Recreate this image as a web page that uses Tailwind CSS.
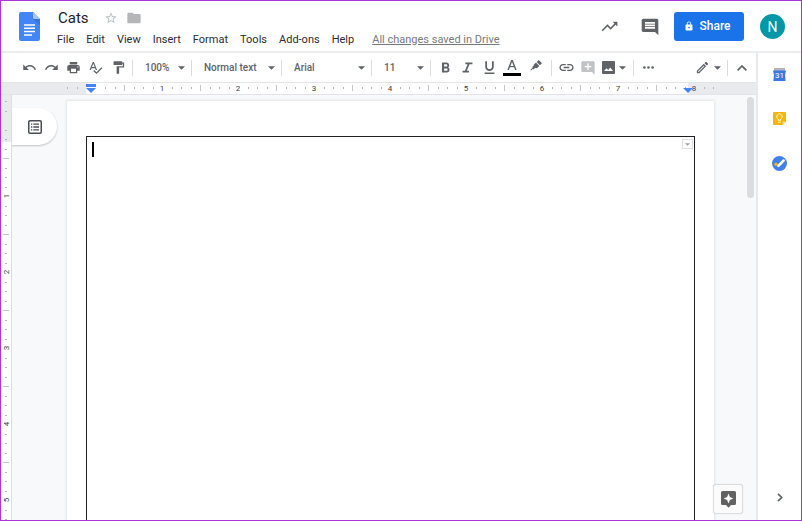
<!DOCTYPE html>
<html lang="en">
<head>
<meta charset="utf-8">
<title>Cats - Docs</title>
<script src="https://cdn.jsdelivr.net/npm/@tailwindcss/browser@4"></script>
</head>
<body>
<div class="flex h-screen flex-col overflow-hidden border border-[#ad35d3] bg-white font-[Roboto,sans-serif] text-[#3c4043]">

  <header class="flex h-[52px] shrink-0 items-start border-b-2 border-[#ebecee] pl-[18px] pr-4">
    <a href="#" aria-label="Docs home" class="mt-[11px] mr-[11px]">
      <svg class="block h-[29px] w-[21px]" viewBox="0 0 21 29"><path d="M2 0h12l7 7v20a2 2 0 0 1-2 2H2a2 2 0 0 1-2-2V2a2 2 0 0 1 2-2z" fill="#4285f4"/><path d="M14 7l7 6V7z" fill="#3a74dc"/><path d="M14 0l7 7h-5.500a1.500 1.500 0 0 1-1.500-1.500z" fill="#a6c5fa"/><path d="M5 13h11M5 16.300h11M5 19.600h11M5 22.900h8" stroke="#fff" stroke-width="1.500"/></svg>
    </a>
    <div class="flex flex-col pt-[7px]">
      <div class="flex h-5 items-center pl-[7px]">
        <h1 class="mr-[15px] text-[15px] leading-5 text-[#202124]">Cats</h1>
        <button aria-label="Star" class="mr-2"><svg class="block size-[14px]" viewBox="0 0 24 24" fill="#bdc1c6"><path d="M22 9.240l-7.190-.62L12 2 9.190 8.630 2 9.240l5.460 4.730L5.820 21 12 17.270 18.180 21l-1.630-7.030L22 9.240zM12 15.400l-3.760 2.270 1-4.280-3.320-2.880 4.380-.38L12 6.100l1.710 4.040 4.380.38-3.320 2.880 1 4.280L12 15.400z"/></svg></button>
        <button aria-label="Move to folder"><svg class="block size-4" viewBox="0 0 24 24" fill="#b4b6b8"><path d="M10 4H4c-1.100 0-2 .9-2 2v12c0 1.100.9 2 2 2h16c1.100 0 2-.9 2-2V8c0-1.100-.9-2-2-2h-8l-2-2z"/></svg></button>
      </div>
      <nav class="flex h-6 items-center gap-3 whitespace-nowrap pl-1.5 text-[11px] text-[#2b2d30]">
        <button>File</button><button>Edit</button><button>View</button><button>Insert</button><button>Format</button><button>Tools</button><button>Add-ons</button><button>Help</button>
        <a href="#" class="ml-1.5 text-[#777a7d] underline">All changes saved in Drive</a>
      </nav>
    </div>
    <div class="ml-auto flex items-center pt-[11px]">
      <button aria-label="Activity" class="mr-[21px]"><svg class="block size-[19px]" viewBox="0 0 24 24" fill="#5f6368"><path d="M16 6l2.290 2.290-4.880 4.880-4-4L2 16.590 3.410 18l6-6 4 4 6.300-6.290L22 12V6z"/></svg></button>
      <button aria-label="Comments" class="mr-[14px]"><svg class="block size-5" viewBox="0 0 24 24" fill="#5f6368"><path d="M21.990 4c0-1.100-.89-2-1.990-2H4c-1.100 0-2 .9-2 2v12c0 1.100.9 2 2 2h14l4 4-.01-18zM18 14H6v-2h12v2zm0-3H6V9h12v2zm0-3H6V6h12v2z"/></svg></button>
      <button class="mr-4 flex h-[29px] w-[70px] items-center justify-center gap-1.5 rounded-[3px] bg-[#1a73e8] pb-px pr-1 text-xs font-medium text-white"><svg class="block size-[10px]" viewBox="2 0 20 23" fill="#fff"><path d="M18 8h-1V6c0-2.760-2.240-5-5-5S7 3.240 7 6v2H6c-1.100 0-2 .9-2 2v10c0 1.100.9 2 2 2h12c1.100 0 2-.9 2-2V10c0-1.100-.9-2-2-2zm-6 9c-1.100 0-2-.9-2-2s.9-2 2-2 2 .9 2 2-.9 2-2 2zm3.100-9H8.900V6c0-1.710 1.390-3.100 3.100-3.100s3.100 1.390 3.100 3.100v2z"/></svg>Share</button>
      <button aria-label="Account: N" class="size-[25px] rounded-full bg-[#0097a7] text-sm text-white">N</button>
    </div>
  </header>

  <div class="flex min-h-0 flex-1">
    <div class="flex min-w-0 flex-1 flex-col">

      <div role="toolbar" aria-label="Formatting" class="flex h-[29px] shrink-0 items-center pl-[17px] pr-[3px] text-[10px] font-medium text-[#5f6368]">
        <button aria-label="Undo" class="flex w-[22px] justify-center"><svg class="size-[15px]" viewBox="0 0 24 24" fill="currentColor"><path d="M12.500 8c-2.650 0-5.050.99-6.900 2.600L2 7v9h9l-3.620-3.620c1.390-1.160 3.160-1.880 5.120-1.880 3.540 0 6.550 2.310 7.600 5.500l2.370-.78C21.080 11.030 17.150 8 12.500 8z"/></svg></button>
        <button aria-label="Redo" class="flex w-[22px] justify-center"><svg class="size-[15px]" viewBox="0 0 24 24" fill="currentColor"><path d="M18.400 10.600C16.550 8.990 14.150 8 11.500 8c-4.650 0-8.580 3.030-9.960 7.220L3.900 16c1.050-3.190 4.050-5.500 7.600-5.500 1.950 0 3.730.72 5.120 1.880L13 16h9V7l-3.600 3.600z"/></svg></button>
        <button aria-label="Print" class="flex w-[22px] justify-center"><svg class="size-[15px]" viewBox="0 0 24 24" fill="currentColor"><path d="M19 8H5c-1.660 0-3 1.340-3 3v6h4v4h12v-4h4v-6c0-1.660-1.340-3-3-3zm-3 11H8v-5h8v5zm3-7c-.55 0-1-.45-1-1s.45-1 1-1 1 .45 1 1-.45 1-1 1zm-1-9H6v4h12V3z"/></svg></button>
        <button aria-label="Spelling" class="flex w-[22px] justify-center"><svg class="size-[15px]" viewBox="0 0 24 24" fill="currentColor"><path d="M12.450 16h2.090L9.430 3H7.570L2.460 16h2.090l1.120-3h5.640l1.140 3zm-6.020-5L8.500 5.480 10.570 11H6.430zm15.160.59l-8.090 8.090L9.830 16l-1.410 1.410 5.090 5.090L23 13l-1.410-1.410z"/></svg></button>
        <button aria-label="Paint format" class="flex w-6 justify-center"><svg class="size-[15px]" viewBox="0 0 24 24" fill="currentColor"><path d="M18 4V3c0-.55-.45-1-1-1H5c-.55 0-1 .45-1 1v4c0 .55.45 1 1 1h12c.55 0 1-.45 1-1V6h1v4H9v11c0 .55.45 1 1 1h2c.55 0 1-.45 1-1v-9h8V4h-3z"/></svg></button>
        <span class="ml-0.5 h-4 w-px bg-[#dadce0]"></span>
        <label class="flex w-[58px] items-center"><select aria-label="Zoom" class="w-[58px] appearance-none pl-3"><option>100%</option></select><svg class="pointer-events-none -ml-[13px] h-1 w-[7px]" viewBox="0 0 8 4" fill="currentColor"><path d="M0 0h8L4 4z"/></svg></label>
        <span class="h-4 w-px bg-[#dadce0]"></span>
        <label class="flex w-[89px] items-center"><select aria-label="Styles" class="w-[89px] appearance-none pl-3"><option>Normal text</option></select><svg class="pointer-events-none -ml-[13px] h-1 w-[7px]" viewBox="0 0 8 4" fill="currentColor"><path d="M0 0h8L4 4z"/></svg></label>
        <span class="h-4 w-px bg-[#dadce0]"></span>
        <label class="flex w-[89px] items-center"><select aria-label="Font" class="w-[89px] appearance-none pl-3"><option>Arial</option></select><svg class="pointer-events-none -ml-[13px] h-1 w-[7px]" viewBox="0 0 8 4" fill="currentColor"><path d="M0 0h8L4 4z"/></svg></label>
        <span class="h-4 w-px bg-[#dadce0]"></span>
        <label class="flex w-[58px] items-center"><select aria-label="Font size" class="w-[58px] appearance-none pl-3"><option>11</option></select><svg class="pointer-events-none -ml-[13px] h-1 w-[7px]" viewBox="0 0 8 4" fill="currentColor"><path d="M0 0h8L4 4z"/></svg></label>
        <span class="mr-[3px] h-4 w-px bg-[#dadce0]"></span>
        <button aria-label="Bold" class="flex w-[22px] justify-center"><svg class="size-[17px]" viewBox="0 -1 24 24" fill="currentColor"><path d="M15.600 10.790c.97-.67 1.650-1.770 1.650-2.790 0-2.260-1.750-4-4-4H7v14h7.040c2.090 0 3.710-1.700 3.710-3.790 0-1.520-.86-2.820-2.150-3.420zM10 6.500h3c.83 0 1.500.67 1.500 1.500s-.67 1.500-1.500 1.500h-3v-3zm3.500 9H10v-3h3.500c.83 0 1.500.67 1.500 1.500s-.67 1.500-1.500 1.500z"/></svg></button>
        <button aria-label="Italic" class="flex w-[22px] justify-center"><svg class="size-[17px]" viewBox="0 -1 24 24" fill="currentColor"><path d="M9 4v2.500h3.200l-3.900 9H5V18h9v-2.500h-3l3.900-9H19V4z"/></svg></button>
        <button aria-label="Underline" class="flex w-[22px] justify-center"><svg class="size-[17px]" viewBox="0 0 24 24" fill="currentColor"><path d="M12 17c3.310 0 6-2.690 6-6V3h-2.500v8c0 1.930-1.570 3.500-3.500 3.500S8.500 12.930 8.500 11V3H6v8c0 3.310 2.690 6 6 6zm-7 2v2h14v-2H5z"/></svg></button>
        <button aria-label="Text color" class="flex w-6 justify-center"><svg class="h-[17px] w-[18px]" viewBox="0 0 18 17"><path d="M0 14h18v3H0z" fill="#000"/><path d="M8.200 1h1.600l3.900 10h-1.600l-1-2.700H6.900l-1 2.700H4.300zM9 2.900L7.400 7h3.200z" fill="#5f6368"/></svg></button>
        <button aria-label="Highlight color" class="flex w-6 justify-center pb-1"><svg class="h-[11px] w-[12px]" viewBox="0 0 12 11" fill="currentColor"><path d="M8.800 0L12 3.200 9.900 5.200 6.700 2zM6 2.600l3.300 3.300L7 8.300 5 8.100 3.600 9.500 2.900 8.800l-1.500 1.400H0l2.700-2.800-.4-.4 1.500-1.400-.1-.9z"/></svg></button>
        <span class="mx-[3px] h-4 w-px bg-[#dadce0]"></span>
        <button aria-label="Insert link" class="flex w-[22px] justify-center"><svg class="size-[17px]" viewBox="0 0 24 24" fill="currentColor"><path d="M3.900 12c0-1.710 1.390-3.100 3.100-3.100h4V7H7c-2.760 0-5 2.240-5 5s2.240 5 5 5h4v-1.900H7c-1.710 0-3.100-1.390-3.100-3.100zM8 13h8v-2H8v2zm9-6h-4v1.900h4c1.710 0 3.100 1.390 3.100 3.100s-1.390 3.100-3.100 3.100h-4V17h4c2.760 0 5-2.240 5-5s-2.240-5-5-5z"/></svg></button>
        <button aria-label="Add comment" class="flex w-[22px] justify-center text-[#c0c2c5]" disabled><svg class="size-4" viewBox="0 0 24 24" fill="currentColor"><path d="M22 4c0-1.100-.9-2-2-2H4c-1.100 0-2 .9-2 2v12c0 1.100.9 2 2 2h14l4 4V4zm-5 7h-4v4h-2v-4H7V9h4V5h2v4h4v2z"/></svg></button>
        <button aria-label="Insert image" class="flex w-[31px] items-center gap-1 pl-[3px]"><svg class="h-[13px] w-[13px]" viewBox="0 0 13 13" fill="currentColor"><path fill-rule="evenodd" d="M1 0h11a1 1 0 0 1 1 1v11a1 1 0 0 1-1 1H1a1 1 0 0 1-1-1V1a1 1 0 0 1 1-1zm1 10h9L8.200 6.500 6.200 9 4.500 7.200z"/></svg><svg class="h-1 w-[7px]" viewBox="0 0 8 4" fill="currentColor"><path d="M0 0h8L4 4z"/></svg></button>
        <span class="mx-[3px] h-4 w-px bg-[#dadce0]"></span>
        <button aria-label="More" class="flex w-[22px] justify-center"><svg class="h-[3px] w-[11px]" viewBox="0 0 11 3" fill="currentColor"><circle cx="1.400" cy="1.500" r="1.300"/><circle cx="5.500" cy="1.500" r="1.300"/><circle cx="9.600" cy="1.500" r="1.300"/></svg></button>
        <button aria-label="Editing mode" class="ml-auto flex w-[29px] items-center gap-1"><svg class="size-[15px]" viewBox="0 0 24 24" fill="currentColor"><path d="M14.060 9.020l.92.92L5.920 19H5v-.92l9.060-9.060M17.660 3c-.25 0-.51.1-.7.29l-1.830 1.830 3.750 3.750 1.830-1.830c.39-.39.39-1.020 0-1.410l-2.340-2.340c-.2-.2-.45-.29-.71-.29zm-3.600 3.190L3 17.250V21h3.750L17.810 9.940l-3.750-3.750z"/></svg><svg class="h-1 w-[7px]" viewBox="0 0 8 4" fill="currentColor"><path d="M0 0h8L4 4z"/></svg></button>
        <span class="mx-[3px] h-4 w-px bg-[#dadce0]"></span>
        <button aria-label="Hide menus" class="flex w-[22px] justify-center"><svg class="h-[6px] w-[10px]" viewBox="0 0 10 6" fill="none" stroke="currentColor" stroke-width="1.700"><path d="M.6 5.400L5 1l4.400 4.400"/></svg></button>
      </div>

      <div class="h-[13px] shrink-0 border-y border-[#e3e4e7] bg-[#e8eaed]">
        <svg id="ruler-x" class="block h-[11px] w-full" font-family="Roboto, sans-serif" font-size="8" fill="#3c4043"><rect x="85" y="0" width="602" height="11" fill="#fff"/></svg>
      </div>

      <div class="flex min-h-0 flex-1 bg-[#f8f9fa]">
        <div class="w-[11px] shrink-0 border-r border-[#dcdee1] bg-[#e8eaed]">
          <svg id="ruler-y" class="block h-full w-[10px]" font-family="Roboto, sans-serif" font-size="8" fill="#3c4043"><rect x="0" y="47" width="10" height="1000" fill="#fff"/></svg>
        </div>
        <main class="relative flex min-w-0 flex-1 overflow-hidden pl-[55px] pr-[42px] pt-1.5">
          <article class="flex flex-1 bg-white px-[19px] pt-[35px] shadow-[0_0_2px_1px_#e2e3e6]">
            <div class="flex flex-1 items-start justify-between border border-b-0 border-[#202124] pl-[5px] pr-px pt-0.5">
              <div role="textbox" aria-label="Document content" class="mt-[3px] h-[15px] w-0.5 bg-black"></div>
              <button aria-label="Table options" class="flex h-[10px] w-[11px] items-center justify-center border border-[#e0e0e0]"><svg class="h-[3px] w-[5px]" viewBox="0 0 6 3" fill="#a0a0a0"><path d="M0 0h6L3 3z"/></svg></button>
            </div>
          </article>
          <button aria-label="Show document outline" class="absolute left-0 top-[13px] flex h-[37px] w-[45px] items-center rounded-r-full bg-white pl-4 shadow-[0_1px_2px_#bfc1c4]"><svg class="size-[14px]" viewBox="0 0 14 14" fill="none" stroke="#4a4d51"><rect x=".75" y=".75" width="12.500" height="12.500" rx="1.200" stroke-width="1.500"/><path d="M3 4.200h1.300M3 7h1.300M3 9.800h1.300M5.300 4.200H11M5.300 7H11M5.300 9.800H11" stroke-width="1.300"/></svg></button>
          <div class="absolute right-0.5 top-0.5 h-[101px] w-[7px] rounded-full bg-[#dadce0]"></div>
          <button aria-label="Explore" class="absolute bottom-[6px] right-[13px] flex size-[30px] items-center justify-center rounded-[3px] border border-[#dcdddf] bg-[#fbfbfc] shadow-[0_0_1px_#d0d0d0]"><svg class="h-[17px] w-[15px]" viewBox="0 0 15 17" fill="#616161"><path fill-rule="evenodd" d="M1.500 0h12A1.500 1.500 0 0 1 15 1.500v11a1.500 1.500 0 0 1-1.500 1.500H10l-2.500 2.800L5 14H1.500A1.500 1.500 0 0 1 0 12.500v-11A1.500 1.500 0 0 1 1.500 0zm6 2.600L6.100 6.100 2.700 7.500l3.400 1.400 1.400 3.500 1.400-3.500 3.400-1.400-3.400-1.400z"/></svg></button>
        </main>
      </div>
    </div>

    <aside class="flex w-[45px] shrink-0 flex-col items-center border-l-2 border-[#e8e9ec] bg-white pb-[18px] pt-[15px]">
      <button aria-label="Calendar" class="mb-[31px]"><svg class="block h-[13px] w-[13px]" viewBox="0 0 13 13"><path d="M1 0h11v3H1z" fill="#b3b5b9"/><path d="M0 2.500h13L12 7l.6 6H.4L1 7z" fill="#3a78e7"/><text x="6.500" y="10.300" text-anchor="middle" font-family="Roboto, sans-serif" font-size="8" fill="#fff">31</text></svg></button>
      <button aria-label="Keep" class="mb-[31px]"><svg class="block size-[13px]" viewBox="0 0 13 13"><path d="M1 0h11a1 1 0 0 1 1 1v8.500L9.500 13H1a1 1 0 0 1-1-1V1a1 1 0 0 1 1-1z" fill="#f5b50a"/><path d="M13 9.500L9.500 13V9.500z" fill="#f9d983"/><path d="M5.300 8.300V7.100a2.700 2.700 0 1 1 2.400 0v1.200zM5.200 10.200h2.600" fill="none" stroke="#fff" stroke-width=".9"/></svg></button>
      <button aria-label="Tasks"><svg class="block size-[15px]" viewBox="0 0 15 15"><circle cx="7.500" cy="7.500" r="7.500" fill="#4080ee"/><circle cx="4" cy="8.300" r="1.700" fill="#f4b400"/><path d="M6.400 9.800l5.200-5.300" stroke="#fff" stroke-width="2.500" stroke-linecap="round"/></svg></button>
      <button aria-label="Hide side panel" class="mt-auto"><svg class="block h-[9px] w-[6px]" viewBox="0 0 6 9" fill="none" stroke="#5f6368" stroke-width="1.700"><path d="M1 .8l3.700 3.700L1 8.200"/></svg></button>
    </aside>
  </div>
</div>

<script>
const NS = 'http://www.w3.org/2000/svg';
const EIGHTH = 9.5;
function add(parent, tag, attrs, text) {
  const el = document.createElementNS(NS, tag);
  for (const k in attrs) el.setAttribute(k, attrs[k]);
  if (text) el.textContent = text;
  parent.appendChild(el);
}
const rx = document.getElementById('ruler-x');
for (let i = -2; i <= 66; i++) {
  const x = Math.round(85 + i * EIGHTH);
  if (i === 0 || i === 1) continue;
  if (i % 8 === 0) add(rx, 'text', { x: x, y: 8, 'text-anchor': 'middle' }, String(i / 8));
  else if (i % 4 === 0) add(rx, 'rect', { x: x, y: 2, width: 1, height: 6, fill: '#c4c6ca' });
  else add(rx, 'rect', { x: x, y: 4, width: 1, height: 2, fill: '#b6b8bc' });
}
add(rx, 'path', { d: 'M85 1h10v3h-10zM85 5h10l-5 5z', fill: '#4285f4' });
add(rx, 'path', { d: 'M682 5h10l-5 5z', fill: '#4285f4' });
const ry = document.getElementById('ruler-y');
for (let i = -2; i <= 42; i++) {
  const y = Math.round(25 + i * EIGHTH);
  if (i === 0) continue;
  if (i % 8 === 0) add(ry, 'text', { x: 8, y: y, 'text-anchor': 'middle', transform: 'rotate(-90 8 ' + y + ')' }, String(i / 8));
  else if (i % 4 === 0) add(ry, 'rect', { x: 2, y: y, width: 6, height: 1, fill: '#c4c6ca' });
  else add(ry, 'rect', { x: 4, y: y, width: 2, height: 1, fill: '#b6b8bc' });
}
</script>
</body>
</html>
